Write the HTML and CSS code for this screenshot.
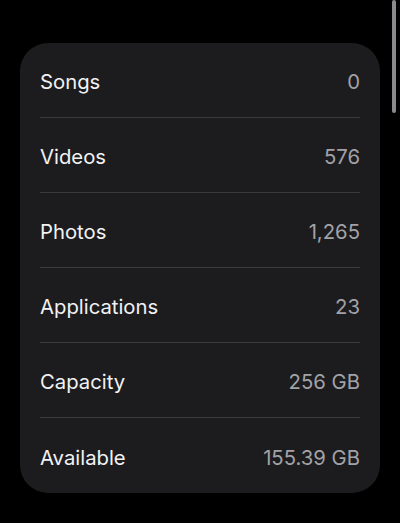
FILE: index.html
```html
<!DOCTYPE html>
<html>
<head>
<meta charset="utf-8">
<link rel="stylesheet" href="styles.css">
</head>
<body>
<div class="scrollbar"></div>
<div class="card">
  <div class="row"><span class="label">Songs</span><span class="value">0</span></div>
  <div class="row"><span class="label">Videos</span><span class="value">576</span></div>
  <div class="row"><span class="label">Photos</span><span class="value">1,265</span></div>
  <div class="row"><span class="label">Applications</span><span class="value">23</span></div>
  <div class="row"><span class="label">Capacity</span><span class="value">256 GB</span></div>
  <div class="row"><span class="label">Available</span><span class="value">155.39 GB</span></div>
</div>
</body>
</html>
```
FILE: styles.css
```css
html, body {
  margin: 0;
  background: #000;
  height: 100%;
}
body {
  padding: 43px 20px 0 20px;
  box-sizing: border-box;
  font-family: Inter, "Noto Sans", sans-serif;
  position: relative;
}
.scrollbar {
  position: absolute;
  top: 0;
  left: 392px;
  width: 4px;
  height: 113px;
  border-radius: 2px;
  background: #8a8a8e;
}
.card {
  background: #1c1c1e;
  border-radius: 28px;
  padding: 0 20px;
  height: 450px;
  box-sizing: border-box;
}
.row {
  height: 75px;
  display: flex;
  justify-content: space-between;
  align-items: center;
  border-bottom: 1px solid #3a3a3c;
  box-sizing: border-box;
  padding-top: 3px;
  font-size: 20.3px;
}
.row:last-child {
  border-bottom: none;
}
.label {
  color: #f2f2f4;
}
.value {
  color: #a2a2a7;
}
```
